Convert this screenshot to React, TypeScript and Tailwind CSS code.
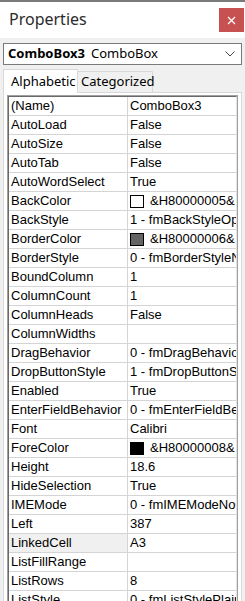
const rows: { name: string; value: string; swatch?: string }[] = [
  { name: "(Name)", value: "ComboBox3" },
  { name: "AutoLoad", value: "False" },
  { name: "AutoSize", value: "False" },
  { name: "AutoTab", value: "False" },
  { name: "AutoWordSelect", value: "True" },
  { name: "BackColor", value: "&H80000005&", swatch: "bg-white" },
  { name: "BackStyle", value: "1 - fmBackStyleOpaque" },
  { name: "BorderColor", value: "&H80000006&", swatch: "bg-[#646464]" },
  { name: "BorderStyle", value: "0 - fmBorderStyleNone" },
  { name: "BoundColumn", value: "1" },
  { name: "ColumnCount", value: "1" },
  { name: "ColumnHeads", value: "False" },
  { name: "ColumnWidths", value: "" },
  { name: "DragBehavior", value: "0 - fmDragBehaviorDisabled" },
  { name: "DropButtonStyle", value: "1 - fmDropButtonStyleArrow" },
  { name: "Enabled", value: "True" },
  { name: "EnterFieldBehavior", value: "0 - fmEnterFieldBehaviorSelectAll" },
  { name: "Font", value: "Calibri" },
  { name: "ForeColor", value: "&H80000008&", swatch: "bg-black" },
  { name: "Height", value: "18.6" },
  { name: "HideSelection", value: "True" },
  { name: "IMEMode", value: "0 - fmIMEModeNoControl" },
  { name: "Left", value: "387" },
  { name: "LinkedCell", value: "A3" },
  { name: "ListFillRange", value: "" },
  { name: "ListRows", value: "8" },
  { name: "ListStyle", value: "0 - fmListStylePlain" },
];

const App = () => {
  return (
    <div className="w-[245px] h-[601px] overflow-hidden bg-[#f0f0f0] font-['Noto_Sans',sans-serif]">
      {/* title bar */}
      <div className="h-[38px] bg-white border-t-2 border-[#7a7a7a] flex items-center justify-between pl-[9px]">
        <span className="text-[16px] text-[#2b2b2b] leading-none -mt-[3px]">Properties</span>
        <div className="w-[25px] h-[24px] mr-px bg-[#c75050] flex items-center justify-center">
          <svg width="9" height="9" viewBox="0 0 9 9">
            <path d="M1 1L8 8M8 1L1 8" stroke="white" strokeWidth="1.3" />
          </svg>
        </div>
      </div>

      {/* object combo */}
      <div className="px-[3px] pt-[5px]">
        <div className="h-[22px] bg-white border border-[#7a7a7a] flex items-center pl-[4px] pr-[6px] text-[13px] text-black">
          <span className="font-bold">ComboBox3</span>
          <span className="ml-[6px] flex-1">ComboBox</span>
          <svg width="10" height="6" viewBox="0 0 10 6">
            <path d="M0.5 0.5L5 5L9.5 0.5" stroke="#444" strokeWidth="1" fill="none" />
          </svg>
        </div>
      </div>

      {/* tabs */}
      <div className="flex items-end px-[3px] mt-[4px] h-[23px] text-[13px] text-black">
        <div className="h-[24px] w-[75px] bg-white border border-b-0 border-[#d9d9d9] flex items-center pl-[7px] relative z-10 -mb-px">
          Alphabetic
        </div>
        <div className="h-[21px] w-[75px] bg-[#f0f0f0] border border-l-0 border-b-0 border-[#d9d9d9] flex items-center pl-[3px]">
          Categorized
        </div>
      </div>

      {/* property grid */}
      <div className="mx-[3px] h-[520px] bg-white border border-[#d9d9d9] pt-[2px] pl-[3px] pr-[3px]">
        <div className="border border-[#a0a0a0] h-full">
          <div className="border border-[#696969] border-r-[#e3e3e3] h-full overflow-hidden font-['Liberation_Sans',sans-serif] text-[13px] text-black">
            {rows.map((r) => (
              <div key={r.name} className="grid grid-cols-[119px_1fr] h-[19px]">
                <div
                  className={`border-b border-r border-[#d4d4d4] pl-[2px] leading-[18px] whitespace-nowrap overflow-hidden ${
                    r.name === "LinkedCell" ? "bg-[#f0f0f0]" : ""
                  }`}
                >
                  {r.name}
                </div>
                <div className="border-b border-[#d4d4d4] pl-[2px] leading-[18px] whitespace-nowrap overflow-hidden flex items-center">
                  {r.swatch && (
                    <span className={`inline-block w-[14px] h-[13px] border border-black mr-[6px] shrink-0 ${r.swatch}`} />
                  )}
                  <span>{r.value}</span>
                </div>
              </div>
            ))}
          </div>
        </div>
      </div>
    </div>
  );
};

export default App;
